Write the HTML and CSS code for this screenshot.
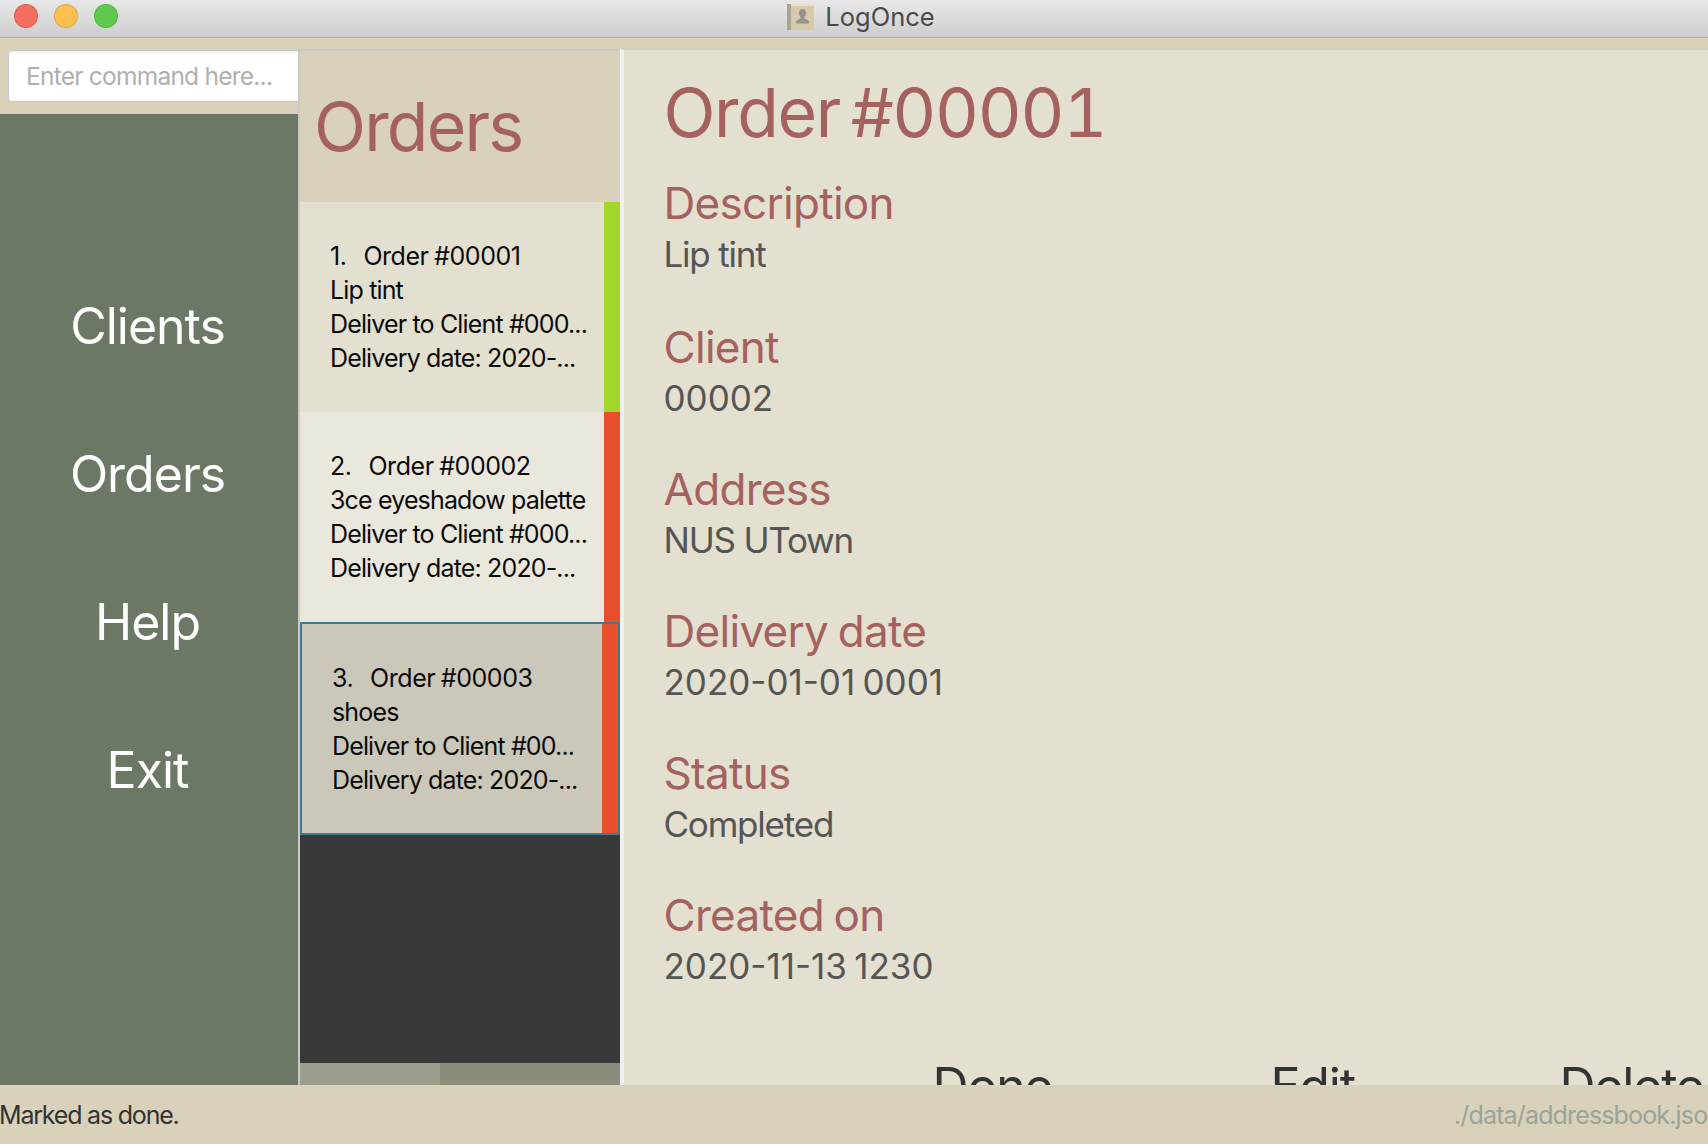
FILE: index.html
```html
<!DOCTYPE html>
<html lang="en">
<head>
<meta charset="utf-8">
<title>LogOnce</title>
<link rel="stylesheet" href="styles.css">
</head>
<body>
<div class="window">
  <header class="titlebar">
    <div class="lights">
      <span class="light red"></span>
      <span class="light yellow"></span>
      <span class="light green"></span>
    </div>
    <div class="title">
      <svg class="app-icon" width="27" height="26" viewBox="0 0 27 26">
        <rect x="0" y="0" width="27" height="26" rx="1" fill="#d8c9ad"/>
        <rect x="0" y="0" width="4" height="26" fill="#a8a397"/>
        <rect x="4" y="0" width="23" height="2" fill="#e6dfcf"/>
        <path d="M15.500 5c2.300 0 3.600 1.700 3.600 4 0 1.700-.8 3.300-1.800 4.100v1.500c1.500.7 4.200 1.300 4.700 3.400v1.500H9v-1.500c.5-2.100 3.200-2.700 4.700-3.400v-1.500c-1-.8-1.800-2.400-1.800-4.100 0-2.300 1.300-4 3.600-4z" fill="#97928a"/>
      </svg>
      <span>LogOnce</span>
    </div>
  </header>
  <main class="body">
    <aside class="side">
      <div class="command-area">
        <input class="command" type="text" placeholder="Enter command here...">
      </div>
      <nav class="nav">
        <a class="nav-item">Clients</a>
        <a class="nav-item">Orders</a>
        <a class="nav-item">Help</a>
        <a class="nav-item">Exit</a>
      </nav>
    </aside>
    <section class="list-panel">
      <h2 class="list-title">Orders</h2>
      <div class="cards">
        <article class="card odd done">
          <div class="card-text">
            <div class="card-head"><span class="idx">1.</span>Order #00001</div>
            <div>Lip tint</div>
            <div>Deliver to Client #000...</div>
            <div>Delivery date: 2020-...</div>
          </div>
          <div class="flag"></div>
        </article>
        <article class="card even">
          <div class="card-text">
            <div class="card-head"><span class="idx">2.</span>Order #00002</div>
            <div>3ce eyeshadow palette</div>
            <div>Deliver to Client #000...</div>
            <div>Delivery date: 2020-...</div>
          </div>
          <div class="flag"></div>
        </article>
        <article class="card selected">
          <div class="card-text">
            <div class="card-head"><span class="idx">3.</span>Order #00003</div>
            <div>shoes</div>
            <div>Deliver to Client #00...</div>
            <div>Delivery date: 2020-...</div>
          </div>
          <div class="flag"></div>
        </article>
      </div>
      <div class="scrollbar"><div class="thumb"></div></div>
    </section>
    <section class="detail">
      <h1 class="detail-title">Order #00001</h1>
      <div class="field first"><div class="label">Description</div><div class="value">Lip tint</div></div>
      <div class="field"><div class="label">Client</div><div class="value num">00002</div></div>
      <div class="field"><div class="label">Address</div><div class="value">NUS UTown</div></div>
      <div class="field"><div class="label">Delivery date</div><div class="value num">2020-01-01 0001</div></div>
      <div class="field"><div class="label">Status</div><div class="value">Completed</div></div>
      <div class="field"><div class="label">Created on</div><div class="value num">2020-11-13 1230</div></div>
      <div class="actions">
        <span class="action a-done">Done</span>
        <span class="action a-edit">Edit</span>
        <span class="action">Delete</span>
      </div>
    </section>
  </main>
  <footer class="status">
    <span class="status-msg">Marked as done.</span>
    <span class="status-path">./data/addressbook.json</span>
  </footer>
</div>
</body>
</html>
```
FILE: styles.css
```css
* { box-sizing: border-box; }
html, body { margin: 0; padding: 0; height: 100%; overflow: hidden; }
body { font-family: Inter, "Liberation Sans", sans-serif; }
.window { width: 1708px; height: 1144px; display: flex; flex-direction: column; overflow: hidden; background: #d9d1b9; }

.titlebar { height: 38px; flex: none; position: relative; display: flex; align-items: center; justify-content: center;
  background: linear-gradient(#e8e8e8, #cecece); border-bottom: 1px solid #b2b2b2; }
.lights { position: absolute; left: 14px; top: 4px; display: flex; gap: 16px; }
.light { width: 24px; height: 24px; border-radius: 50%; border: 1px solid rgba(0,0,0,.12); }
.red { background: #f46f60; }
.yellow { background: #fbc04f; }
.green { background: #5fca4d; }
.title { display: flex; align-items: center; gap: 11px; margin-left: 14px; margin-top: -4px; font-size: 25.5px; color: #4a4a4a; }
.app-icon { display: block; }

.body { flex: 1; min-height: 0; display: flex; overflow: hidden; }

.side { width: 298px; flex: none; display: flex; flex-direction: column; background: #d9d1b9; }
.command-area { height: 76px; flex: none; padding: 12px 0 0 8px; }
.command { display: block; width: 300px; height: 52px; padding: 0 0 0 17px; border: 1px solid #c9c9c9; border-radius: 4px; background: #fff;
  box-shadow: inset 0 3px 3px -2px rgba(0,0,0,.1);
  font-family: inherit; font-size: 24.5px; letter-spacing: -.76px; outline: none; }
.command::placeholder { color: #b0b0b0; opacity: 1; }
.nav { flex: 1; display: flex; flex-direction: column; align-items: center; padding: 175px 3px 0 0; background: #6c7766; }
.nav-item { height: 148px; flex: none; color: #fff; font-size: 50px; line-height: 74px; letter-spacing: -1px; }

.list-panel { width: 322px; flex: none; position: relative; margin-top: 11px; display: flex; flex-direction: column; border-left: 2px solid #c9c9c9; border-top: 2px solid #c9c9c9; background: #383838; }
.list-title { margin: 0; height: 151px; flex: none; padding-left: 14px; background: #d9d1b9; color: #a56060; font-size: 68px; font-weight: 400; line-height: 150px; letter-spacing: -1.8px; }
.cards { flex: 1; min-height: 0; }
.card { height: 210px; display: flex; color: #0a0a0a; }
.card-text { flex: 1; min-width: 0; padding: 37px 0 0 30px; font-size: 25px; line-height: 34px; letter-spacing: -.85px; white-space: nowrap; overflow: hidden; }
.card-head { letter-spacing: -.45px; word-spacing: -1px; }
.idx { display: inline-block; margin-right: 17px; letter-spacing: -.5px; }
.flag { width: 16px; flex: none; background: #e84f2d; }
.odd { background: #e3e0cf; }
.even { background: #eae8dd; }
.done .flag { background: #a2d729; }
.selected { height: 213px; background: #ccc8b9; border: 2px solid #3f7a90; }
.selected .flag { width: 16px; }
.selected .card-text { padding: 37px 0 0 30px; }
.scrollbar { height: 22px; flex: none; background: #8b8d7b; }
.thumb { width: 140px; height: 100%; background: #9c9e8d; }

.detail { flex: 1; min-width: 0; overflow: hidden; margin-top: 11px; padding: 22px 0 0 39.5px; background: #e3e0cf; border-left: 4px solid #f0f0f0; border-top: 1px solid #d0d0d0; }
.detail-title { margin: 0 0 26px; color: #a56060; font-size: 68px; font-weight: 400; line-height: 80px; letter-spacing: -1.4px; word-spacing: -6px; font-variant-numeric: tabular-nums; white-space: nowrap; }
.field { margin-bottom: 40px; }
.field.first { margin-bottom: 42px; }
.label { color: #a56060; font-size: 44px; line-height: 51px; letter-spacing: -.7px; word-spacing: -2px; }
.value { color: #555; font-size: 35px; line-height: 51px; letter-spacing: -1.2px; }
.value.num { letter-spacing: 0; word-spacing: -2.5px; }
.actions { display: flex; margin: 64px 0 0 269px; color: #333; font-size: 50px; line-height: 60px; letter-spacing: -1.2px; white-space: nowrap; }
.a-done { width: 338px; flex: none; }
.a-edit { width: 289px; flex: none; }

.status { height: 59px; flex: none; display: flex; align-items: center; justify-content: space-between; background: #d9d1b9; font-size: 25px; white-space: nowrap; overflow: hidden; letter-spacing: -1.2px; }
.status-msg { color: #333; margin-left: -1px; }
.status-path { color: #9ba39a; width: 254px; overflow: hidden; letter-spacing: -.85px; }
```
